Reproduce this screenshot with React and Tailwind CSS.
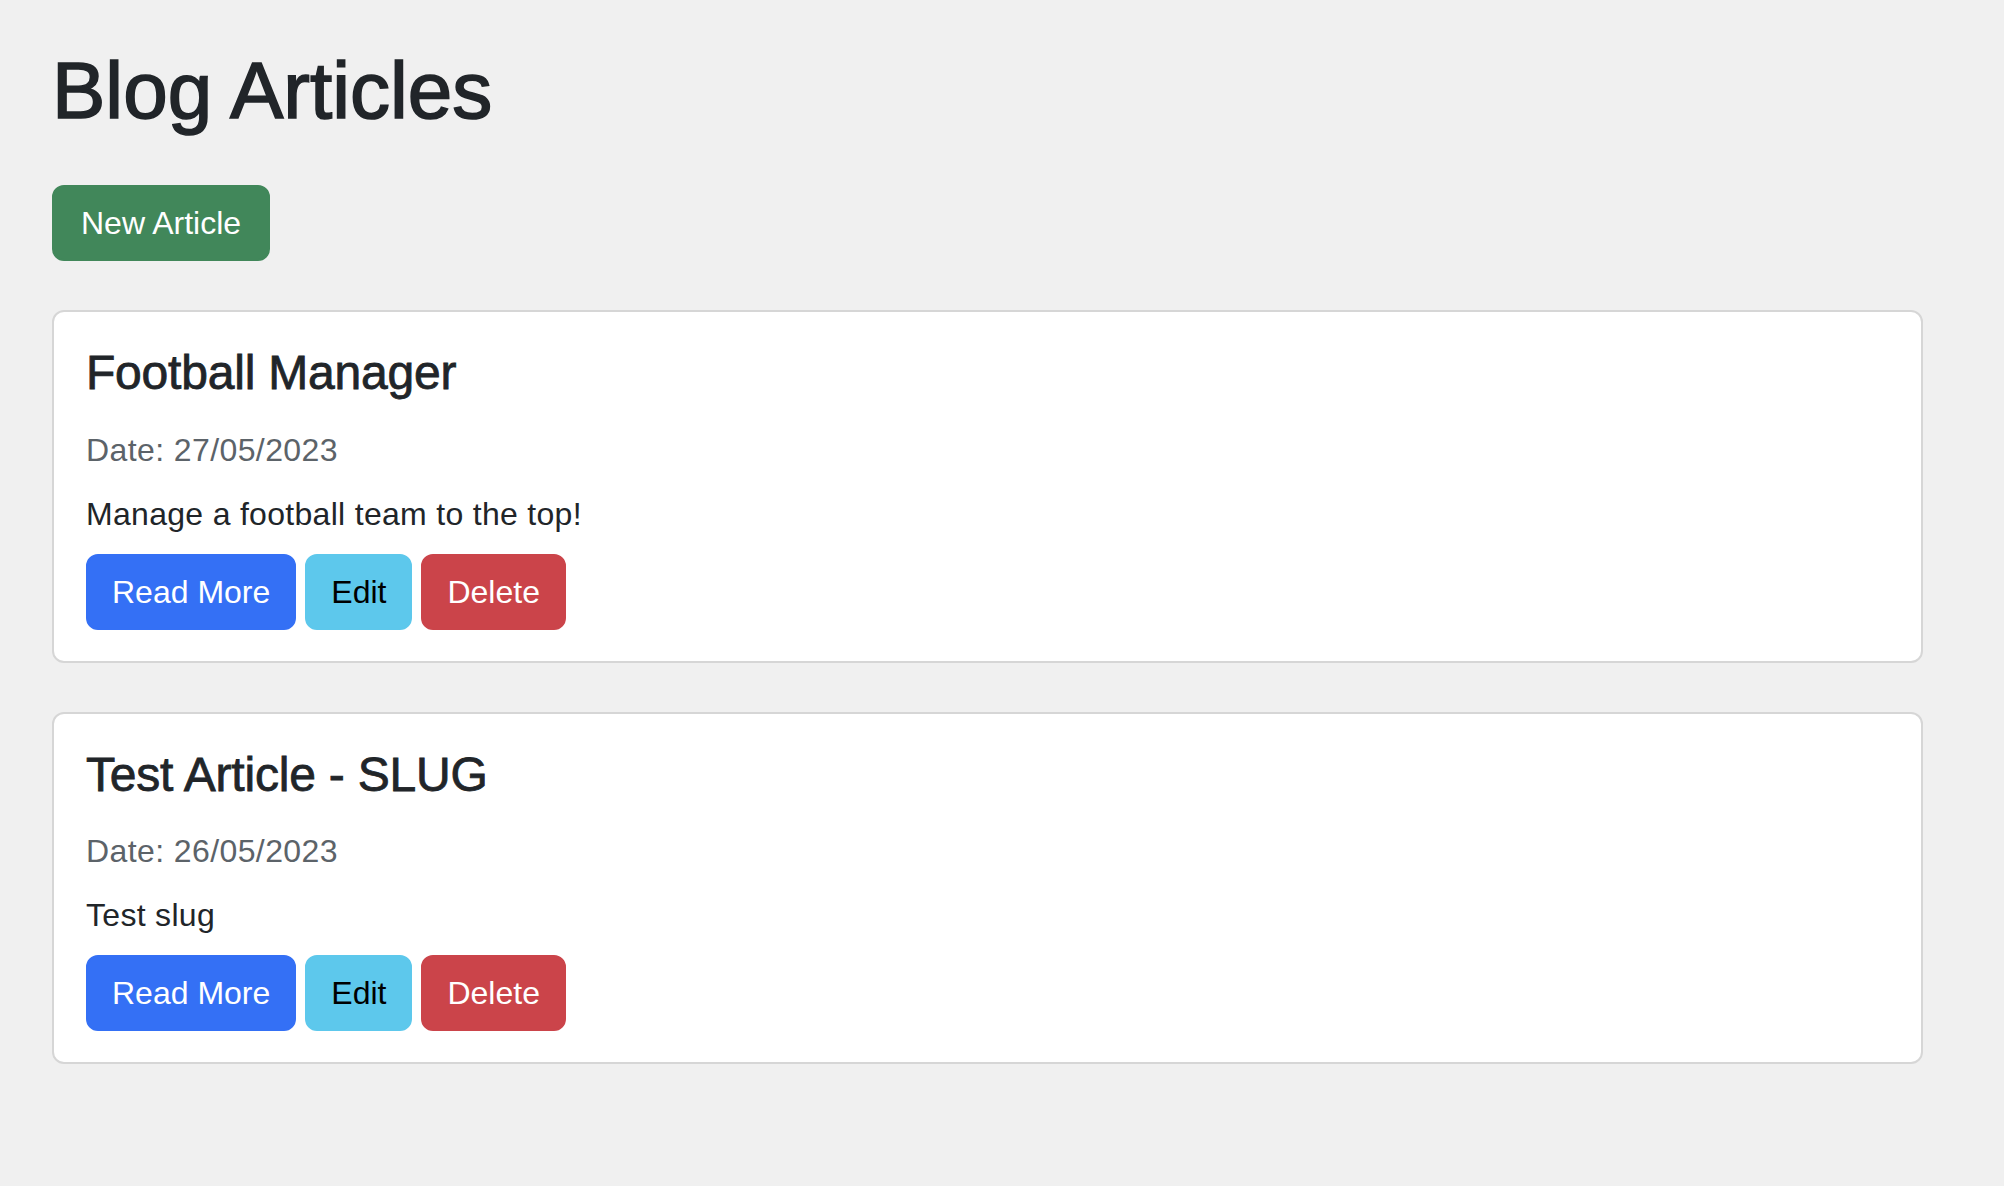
import React from 'react';

const articles = [
    {
        id: 1,
        title: 'Football Manager',
        date: '27/05/2023',
        description: 'Manage a football team to the top!',
    },
    {
        id: 2,
        title: 'Test Article - SLUG',
        date: '26/05/2023',
        description: 'Test slug',
    },
];

function ArticleCard({ article }) {
    return (
        <div className="bg-white border-2 border-[#d6d6d6] rounded-[12px] px-[32px] pt-[32px] pb-[31px]">
            <h5 className="text-[48px] leading-[57.6px] text-[#212529] tracking-[-0.2px] [-webkit-text-stroke:0.8px_#212529] mb-[24px]">
                {article.title}
            </h5>
            <p className="text-[32px] leading-[48px] text-[#5c6369] tracking-[0.4px] mb-[16px]">Date: {article.date}</p>
            <p className="text-[32px] leading-[48px] text-[#212529] tracking-[0.3px] mb-[16px]">{article.description}</p>
            <div className="flex gap-[9px]">
                <button className="bg-[#3470f5] border-2 border-[#3470f5] text-white text-[32px] leading-[48px] px-[24px] py-[12px] rounded-[12px]">
                    Read More
                </button>
                <button className="bg-[#5dc8ec] border-2 border-[#5dc8ec] text-black text-[32px] leading-[48px] px-[24px] py-[12px] rounded-[12px]">
                    Edit
                </button>
                <button className="bg-[#cb444a] border-2 border-[#cb444a] text-white text-[32px] leading-[48px] px-[24px] py-[12px] rounded-[12px]">
                    Delete
                </button>
            </div>
        </div>
    );
}

export default function App() {
    return (
        <div className="min-h-screen bg-[#f0f0f0] pl-[52px] pr-[81px] pt-[43px] pb-[40px] font-['Liberation_Sans',Arial,sans-serif]">
            <h1 className="text-[80px] leading-[96px] text-[#212529] [-webkit-text-stroke:1.6px_#212529]">Blog Articles</h1>

            <button className="mt-[46px] bg-[#41875a] border-2 border-[#41875a] text-white text-[32px] leading-[48px] px-[27px] py-[12px] rounded-[12px]">
                New Article
            </button>

            <div className="mt-[49px] flex flex-col gap-[49px]">
                {articles.map((article) => (
                    <ArticleCard key={article.id} article={article} />
                ))}
            </div>
        </div>
    );
}
